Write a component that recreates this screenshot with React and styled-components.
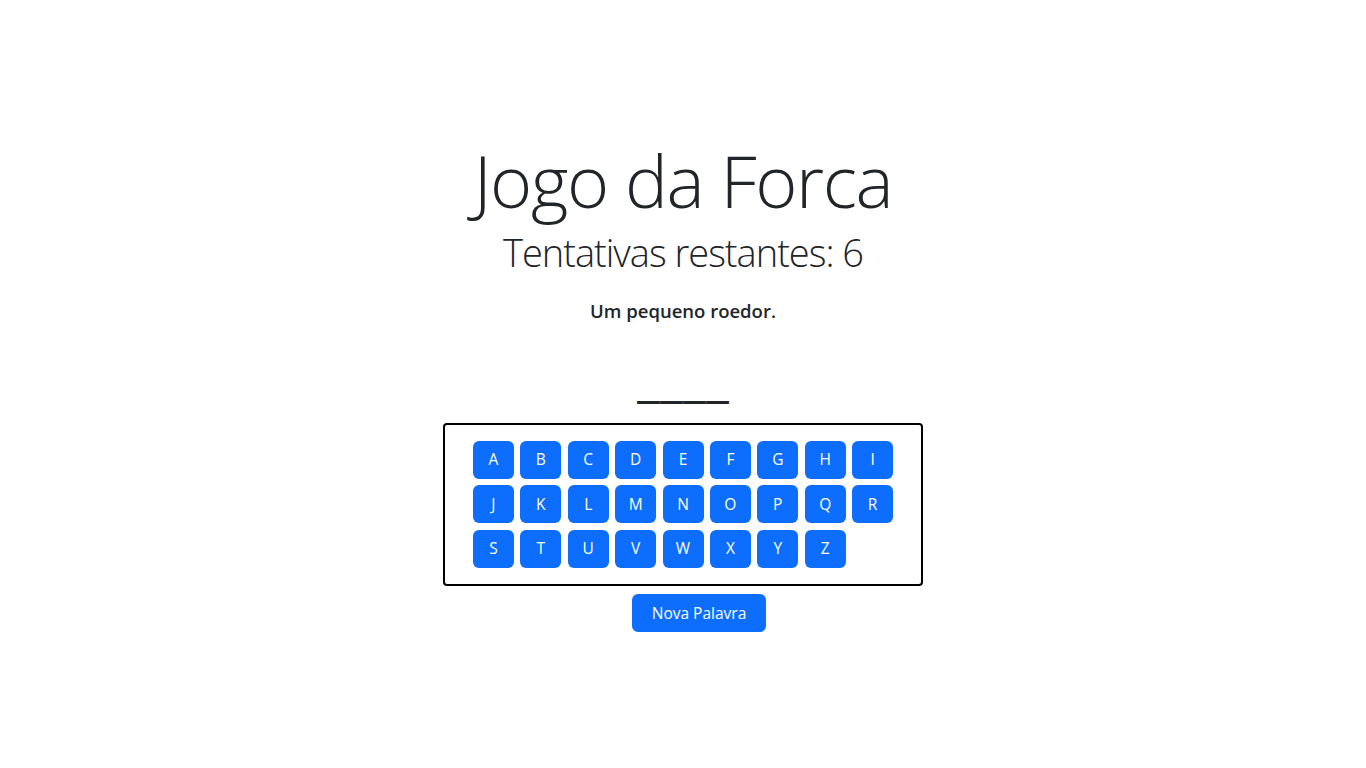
import React from "react";
import styled, { createGlobalStyle } from "styled-components";

const Global = createGlobalStyle`
  html, body { margin: 0; padding: 0; background: #fff; }
  body {
    font-family: "Open Sans", "Noto Sans", sans-serif;
    color: #212529;
    -webkit-font-smoothing: antialiased;
  }
  * { box-sizing: border-box; }
`;

const Page = styled.main`
  display: flex;
  flex-direction: column;
  align-items: center;
  padding-top: 137px;
  text-align: center;
`;

const Title = styled.h1`
  margin: 0 0 7px;
  font-size: 72px;
  font-weight: 300;
  line-height: 1.2;
  letter-spacing: -1.4px;
`;

const Attempts = styled.h2`
  margin: 0 0 21px;
  font-size: 38px;
  font-weight: 300;
  line-height: 1.2;
  letter-spacing: -1px;
`;

const Hint = styled.p`
  margin: 0 0 31px;
  font-size: 18.5px;
  font-weight: 600;
  line-height: 1.5;
`;

const Word = styled.div`
  font-family: "DejaVu Sans", sans-serif;
  font-size: 44px;
  line-height: 1;
  letter-spacing: 1px;
  padding-left: 1px;
  margin-bottom: 23px;
`;

const Keyboard = styled.div`
  width: 480px;
  border: 2px solid #000;
  border-radius: 4px;
  padding: 16px 27px 16px;
  display: grid;
  grid-template-columns: repeat(9, 41px);
  column-gap: 6.4px;
  row-gap: 6.5px;
  justify-content: center;
`;

const Key = styled.button`
  height: 38px;
  border: none;
  border-radius: 6px;
  background: #0d6efd;
  color: #fff;
  font-family: inherit;
  font-size: 15.5px;
  line-height: 1.5;
  padding: 0;
  cursor: pointer;
`;

const NewWord = styled.button`
  margin-top: 8px;
  margin-left: 32px;
  width: 134px;
  height: 38px;
  border: none;
  border-radius: 6px;
  background: #0d6efd;
  color: #fff;
  font-family: inherit;
  font-size: 15.5px;
  padding: 6px 12px;
  cursor: pointer;
`;

const letters = "ABCDEFGHIJKLMNOPQRSTUVWXYZ".split("");

export default function App() {
  return (
    <>
      <Global />
      <Page>
        <Title>Jogo da Forca</Title>
        <Attempts>Tentativas restantes: 6</Attempts>
        <Hint>Um pequeno roedor.</Hint>
        <Word>____</Word>
        <Keyboard>
          {letters.map((l) => (
            <Key key={l}>{l}</Key>
          ))}
        </Keyboard>
        <NewWord>Nova Palavra</NewWord>
      </Page>
    </>
  );
}
